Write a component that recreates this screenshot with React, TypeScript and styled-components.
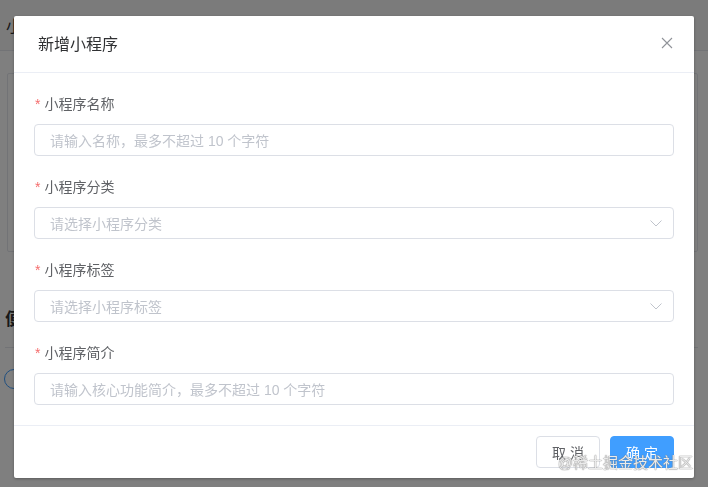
import React from 'react';
import styled, { createGlobalStyle } from 'styled-components';

const GlobalStyle = createGlobalStyle`
  html, body {
    margin: 0;
    padding: 0;
    background: #fff;
    font-family: "Liberation Sans", "Noto Sans CJK SC", sans-serif;
  }
  * { box-sizing: border-box; }
`;

/* page underneath the dialog */
const Page = styled.div`
  width: 708px;
  height: 487px;
  overflow: hidden;
  background: #fff;
`;

const PageHeader = styled.div`
  height: 51px;
  display: flex;
  align-items: center;
  padding-left: 6px;
  font-size: 16px;
  color: #303133;
  background: #f7f7f7;
  border-bottom: 1px solid #e4e7ed;
`;

const PageBody = styled.div`
  padding: 22px 10px 0 7px;
`;

const Card = styled.div`
  height: 179px;
  border: 1px solid #e4e7ed;
  border-radius: 2px;
`;

const SectionTitle = styled.div`
  margin-top: 53px;
  padding-bottom: 17px;
  font-size: 17px;
  font-weight: bold;
  color: #303133;
  border-bottom: 1px solid #e4e7ed;
  margin-left: -2px;
`;

const Ring = styled.div`
  margin-top: 21px;
  margin-left: -3px;
  width: 20px;
  height: 20px;
  border-radius: 50%;
  border: 1px solid #409eff;
`;

/* dialog */
const Mask = styled.div`
  position: fixed;
  inset: 0;
  background: rgba(0, 0, 0, 0.5);
`;

const Dialog = styled.div`
  position: fixed;
  top: 16px;
  left: 14px;
  width: 680px;
  background: #fff;
  border-radius: 2px;
  box-shadow: 0 1px 3px rgba(0, 0, 0, 0.3);
`;

const Header = styled.div`
  position: relative;
  padding: 17px 24px 15px 24px;
  border-bottom: 1px solid #ebeef5;
`;

const Title = styled.div`
  font-size: 16px;
  line-height: 24px;
  color: #303133;
`;

const Close = styled.button`
  position: absolute;
  top: 21px;
  right: 21px;
  width: 12px;
  height: 12px;
  padding: 0;
  border: none;
  background: transparent;
  display: flex;
  cursor: pointer;
`;

const Body = styled.div`
  padding: 20px 20px 0 20px;
  border-bottom: 1px solid #ebeef5;
`;

const Field = styled.div`
  margin-bottom: 20px;
`;

const Label = styled.div`
  font-size: 14px;
  line-height: 22px;
  color: #606266;
  margin-bottom: 9px;
  display: flex;
  align-items: center;
`;

const Star = styled.span`
  color: #f56c6c;
  margin-right: 4px;
  margin-left: 1px;
`;

const Box = styled.div`
  position: relative;
  height: 32px;
  border: 1px solid #dcdfe6;
  border-radius: 4px;
  display: flex;
  align-items: center;
  padding: 0 15px;
`;

const Placeholder = styled.span`
  font-size: 14px;
  color: #c0c4cc;
`;

const Arrow = styled.svg`
  position: absolute;
  right: 11px;
  top: 12px;
`;

const Footer = styled.div`
  display: flex;
  justify-content: flex-end;
  gap: 10px;
  padding: 10px 20px 10px 20px;
`;

const Button = styled.button<{ $primary?: boolean }>`
  width: 64px;
  height: 32px;
  border-radius: 4px;
  font-size: 14px;
  font-family: inherit;
  cursor: pointer;
  border: 1px solid ${(p) => (p.$primary ? '#409eff' : '#dcdfe6')};
  background: ${(p) => (p.$primary ? '#409eff' : '#fff')};
  color: ${(p) => (p.$primary ? '#fff' : '#606266')};
`;

const Watermark = styled.div`
  position: fixed;
  right: 15px;
  bottom: 15px;
  font-size: 15px;
  line-height: 18px;
  color: rgba(255, 255, 255, 0.85);
  text-shadow: 0 0 1px #777, 0 0 1px #777;
  pointer-events: none;
`;

const fields = [
  { label: '小程序名称', placeholder: '请输入名称，最多不超过 10 个字符', select: false },
  { label: '小程序分类', placeholder: '请选择小程序分类', select: true },
  { label: '小程序标签', placeholder: '请选择小程序标签', select: true },
  { label: '小程序简介', placeholder: '请输入核心功能简介，最多不超过 10 个字符', select: false },
];

const App = () => {
  return (
    <>
      <GlobalStyle />
      <Page>
        <PageHeader>小程序管理</PageHeader>
        <PageBody>
          <Card />
          <SectionTitle>便捷服务</SectionTitle>
          <Ring />
        </PageBody>
      </Page>
      <Mask />
      <Dialog>
        <Header>
          <Title>新增小程序</Title>
          <Close aria-label="关闭">
            <svg width="12" height="12" viewBox="0 0 12 12">
              <path d="M1 1L11 11M11 1L1 11" stroke="#909399" strokeWidth="1.1" fill="none" />
            </svg>
          </Close>
        </Header>
        <Body>
          {fields.map((f) => (
            <Field key={f.label}>
              <Label>
                <Star>*</Star>
                {f.label}
              </Label>
              <Box>
                <Placeholder>{f.placeholder}</Placeholder>
                {f.select && (
                  <Arrow width="12" height="7" viewBox="0 0 12 7">
                    <path d="M0.5 0.5L6 6L11.5 0.5" stroke="#c0c4cc" strokeWidth="1" fill="none" />
                  </Arrow>
                )}
              </Box>
            </Field>
          ))}
        </Body>
        <Footer>
          <Button>取 消</Button>
          <Button $primary>确 定</Button>
        </Footer>
      </Dialog>
      <Watermark>@稀土掘金技术社区</Watermark>
    </>
  );
};

export default App;
